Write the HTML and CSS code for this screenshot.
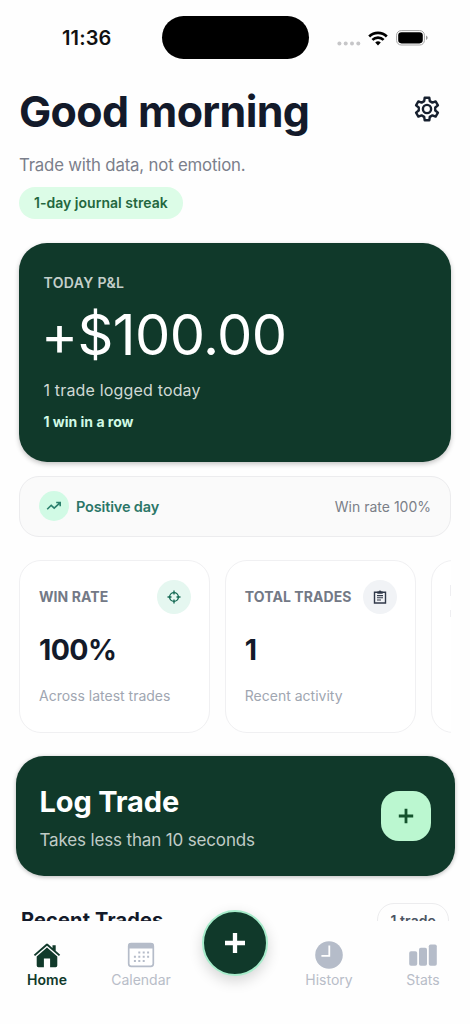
FILE: index.html
```html
<!DOCTYPE html>
<html lang="en">
<head>
<meta charset="utf-8">
<title>Trading Journal</title>
<link rel="stylesheet" href="styles.css">
</head>
<body>
<div class="phone">
  <div class="status">
    <span class="time">11:36</span>
    <span class="island"></span>
    <span class="signals">
      <svg class="dots" width="24" height="5" viewBox="0 0 24 5" fill="#c6c6c8"><circle cx="2.4" cy="2.5" r="2"/><circle cx="8.7" cy="2.5" r="2"/><circle cx="15" cy="2.5" r="2"/><circle cx="21.3" cy="2.5" r="2"/></svg>
      <svg class="wifi" width="20" height="15" viewBox="0 0 20 15" fill="none" stroke="#000" stroke-width="2.7"><path d="M1.2 5.5a12.6 12.6 0 0 1 17.6 0"/><path d="M4.4 8.9a8 8 0 0 1 11.2 0"/><path d="M10 14.5l-2.8-2.9a4 4 0 0 1 5.6 0z" fill="#000" stroke="none"/></svg>
      <svg class="battery" width="32" height="16" viewBox="0 0 32 16"><rect x=".6" y=".6" width="27.8" height="14.4" rx="4.6" fill="#fff" stroke="#a4a4a4" stroke-width="1"/><rect x="2.2" y="2.2" width="24.6" height="11.2" rx="3.3"/><path d="M30 5.6q1.7.7 1.7 2.2T30 10z" fill="#999"/></svg>
    </span>
  </div>

  <main class="screen">
    <header class="header">
      <h1 class="title">Good morning</h1>
      <svg class="gear" width="26" height="26" viewBox="-13 -13 26 26" fill="none" stroke="#17202f" stroke-width="2.400" stroke-linejoin="round"><path d="M-2.800-7.900L-2.300-11.300H2.300L2.800-7.900L5.440-6.370L8.640-7.640L10.940-3.660L8.240-1.530V1.530L10.940 3.660L8.640 7.640L5.440 6.370L2.800 7.900L2.300 11.300H-2.300L-2.800 7.900L-5.440 6.370L-8.640 7.640L-10.940 3.660L-8.240 1.530V-1.530L-10.940-3.660L-8.640-7.640L-5.440-6.370z"/><circle r="4.100"/></svg>
    </header>
    <p class="subtitle">Trade with data, not emotion.</p>
    <span class="streak">1-day journal streak</span>

    <section class="hero">
      <div class="hero-label">TODAY P&amp;L</div>
      <div class="hero-amount">+$100.00</div>
      <div class="hero-note">1 trade logged today</div>
      <div class="hero-run">1 win in a row</div>
    </section>

    <section class="mood">
      <span class="mood-icon"><svg width="16" height="10" viewBox="0 0 16 10" fill="none" stroke="#2b7f6c" stroke-width="1.6"><path d="M1.200 8.300l4-4 3 2.800 5.700-5.300M10.200 1.500h4v3.800"/></svg></span>
      <span class="mood-text">Positive day</span>
      <span class="mood-rate">Win rate 100%</span>
    </section>

    <section class="cards">
      <article class="card">
        <div class="card-top"><span class="card-label">WIN RATE</span><span class="card-icon mint"><svg width="14" height="14" viewBox="0 0 14 14" fill="none" stroke="#176b55" stroke-width="1.400"><circle cx="7" cy="7" r="4.400"/><path d="M7 .5v4M7 9.500v4M.5 7h4M9.500 7h4"/></svg></span></div>
        <div class="card-value">100%</div>
        <div class="card-note">Across latest trades</div>
      </article>
      <article class="card">
        <div class="card-top"><span class="card-label">TOTAL TRADES</span><span class="card-icon"><svg width="14" height="14" viewBox="0 0 14 14" fill="none" stroke="#303949" stroke-width="1.400"><path d="M1.500 2.300h11v10.700h-11z"/><path d="M4 5.600h6M4 7.800h6M4 10h4" stroke-width="1.100"/><path d="M4.300 1.500h1.300a1.450 1.450 0 0 1 2.800 0h1.300v2.300H4.300z" fill="#303949" stroke="none"/></svg></span></div>
        <div class="card-value">1</div>
        <div class="card-note">Recent activity</div>
      </article>
      <article class="card upcoming"><i class="edge"></i><i class="edge short"></i></article>
    </section>

    <section class="log">
      <div>
        <div class="log-title">Log Trade</div>
        <div class="log-sub">Takes less than 10 seconds</div>
      </div>
      <span class="log-add"><svg width="16" height="16" viewBox="0 0 16 16" stroke="#14532d" stroke-width="2.800"><path d="M8 .8v14.400M.8 8h14.400"/></svg></span>
    </section>

    <section class="recent">
      <h2 class="recent-title">Recent Trades</h2>
      <span class="recent-count">1 trade</span>
    </section>
  </main>

  <nav class="tabs">
    <a class="tab active">
      <svg width="28" height="26" viewBox="0 0 28 26" fill="#10392a"><path d="M.8 12.800L13 2q1-.8 2 0l4.500 4V3.200h3.200v5.600l4.500 4-1.300 1.300L14 3.700 2.100 14.100z"/><path d="M14 5.600l10.300 9v8.900q0 1.700-1.700 1.700h-5.500v-8.700h-6.200v8.700H5.400q-1.700 0-1.700-1.700v-8.900z"/></svg>
      <span>Home</span>
    </a>
    <a class="tab">
      <svg width="28" height="26" viewBox="0 0 28 26"><rect x="1.700" y="1.700" width="24.600" height="22.600" rx="2.500" fill="#fff" stroke="#b5bcc9" stroke-width="1.700"/><path d="M1.500 6.500V3q0-2 2-2h21q2 0 2 2v3.500z" fill="#b5bcc9"/><g stroke="#b5bcc9" stroke-width="2" stroke-dasharray="2 2.400"><path d="M11.300 10.400h11M6.900 14.700h15.400M6.900 19h11"/></g></svg>
      <span>Calendar</span>
    </a>
    <a class="fab"><svg width="22" height="22" viewBox="0 0 22 22" stroke="#fff" stroke-width="4.300"><path d="M11 1v20M1 11h20"/></svg></a>
    <a class="tab">
      <svg width="28" height="28" viewBox="0 0 28 28"><circle cx="14" cy="14" r="13.800" fill="#b5bcc9"/><path d="M14.300 4.600v10.200H6.400" fill="none" stroke="#fff" stroke-width="1.800"/></svg>
      <span>History</span>
    </a>
    <a class="tab">
      <svg width="28" height="24" viewBox="0 0 28 24" fill="#b5bcc9"><rect x=".2" y="8.200" width="8" height="14.500" rx="1.800"/><rect x="10" y="4.700" width="8" height="18" rx="1.800"/><rect x="19.800" y="1.400" width="8" height="21.300" rx="1.800"/></svg>
      <span>Stats</span>
    </a>
  </nav>
</div>
</body>
</html>
```
FILE: styles.css
```css
* { box-sizing: border-box; }
body { margin: 0; background: #fff; font-family: Inter, "Liberation Sans", sans-serif; color: #131a2a; }
.phone { width: 470px; height: 1024px; overflow: hidden; display: flex; flex-direction: column; background: #fefefe; }

.status { height: 76px; flex: none; padding-top: 16px; display: grid; grid-template-columns: 161.500px 147px 1fr; }
.time { padding-left: 62px; font-size: 20px; font-weight: 600; line-height: 45px; letter-spacing: .15px; color: #111; }
.island { height: 43px; border-radius: 22px; background: #000; }
.signals { display: flex; align-items: flex-start; padding-left: 28px; }
.dots { margin-top: 25px; }
.wifi { margin: 14.500px 0 0 7.500px; }
.battery { margin: 14px 0 0 8px; }

.screen { height: 845px; flex: none; overflow: hidden; padding: 9px 19px 0; display: flex; flex-direction: column; }
.header { height: 52px; flex: none; display: flex; justify-content: space-between; padding-right: 11px; }
.title { margin: 0; font-size: 43px; line-height: 52px; font-weight: 700; letter-spacing: -.65px; white-space: nowrap; }
.gear { margin-top: 11px; }
.subtitle { margin: 16px 0 0; font-size: 16.800px; line-height: 24px; letter-spacing: -.18px; color: #7b7f8b; }
.streak { align-self: flex-start; margin-top: 10px; height: 32px; border-radius: 16px; padding: 0 15px; background: #dcfce7; color: #23673e; font-size: 14px; line-height: 32px; letter-spacing: .02px; font-weight: 600; }

.hero { flex: none; height: 219px; margin-top: 23.500px; padding: 30px 24.500px 0; border-radius: 28px; background: #10392a; color: #fff; box-shadow: 0 2px 5px rgba(0,0,0,.24); }
.hero-label { font-size: 14px; line-height: 20px; font-weight: 600; letter-spacing: .38px; color: #c4cfca; }
.hero-amount { font-size: 56px; line-height: 66px; margin: 9.500px 0 0 -2.500px; font-weight: 400; letter-spacing: -.6px; }
.hero-note { font-size: 16px; line-height: 24px; margin-top: 10px; letter-spacing: .17px; color: #d0d9d5; }
.hero-run { font-size: 14px; line-height: 20px; margin-top: 9.500px; font-weight: 700; color: #d1fae5; }

.mood { flex: none; height: 61px; margin-top: 14px; border: 1px solid #ececee; border-radius: 20px; background: #fafafa; display: flex; align-items: center; padding: 0 19px; }
.mood-icon { width: 30px; height: 30px; border-radius: 50%; background: #d1fae5; display: grid; place-items: center; }
.mood-text { margin-left: 7px; font-size: 14.500px; letter-spacing: -.15px; font-weight: 600; color: #2b7668; }
.mood-rate { margin-left: auto; font-size: 14px; color: #7b7f88; }

.cards { flex: none; height: 173.500px; margin-top: 23px; display: flex; gap: 14.500px; overflow: hidden; }
.card { flex: none; width: 191.300px; border: 1px solid #f0f0f2; border-radius: 22px; background: #fff; padding: 19px 18.500px 19px 19px; }
.card-top { height: 34px; display: flex; align-items: center; justify-content: space-between; white-space: nowrap; }
.card-label { font-size: 14px; font-weight: 700; letter-spacing: .08px; color: #737986; }
.card-icon { width: 34px; height: 34px; border-radius: 50%; background: #f1f3f6; display: grid; place-items: center; }
.card-icon.mint { background: #e5f7f0; }
.card-value { font-size: 28.500px; line-height: 36px; margin-top: 18px; font-weight: 700; letter-spacing: -.6px; }
.card-note { font-size: 14px; line-height: 20px; margin-top: 18px; color: #a0a6b1; white-space: nowrap; }
.upcoming { padding: 24px 0 0 18.400px; }
.edge { display: block; width: 1px; height: 11px; background: #eeeef1; }
.edge.short { height: 7px; margin-top: 14px; }

.log { flex: none; height: 120px; margin: 22.500px -3.500px 0; border-radius: 28px; background: #10392a; padding: 0 24px; display: flex; align-items: center; justify-content: space-between; box-shadow: 0 1px 4px rgba(0,0,0,.28); }
.log-title { font-size: 29px; line-height: 38px; margin-top: 4px; font-weight: 700; letter-spacing: -.15px; color: #fff; }
.log-sub { font-size: 17px; line-height: 24px; margin-top: 7px; letter-spacing: -.15px; color: #c0ccc7; }
.log-add { width: 50px; height: 50px; border-radius: 18px; background: #bbf7d0; display: grid; place-items: center; }

.recent { flex: none; margin-top: 27px; display: flex; justify-content: space-between; padding: 0 2px; }
.recent-title { margin: 2px 0 0; font-size: 20px; line-height: 30px; font-weight: 700; letter-spacing: .15px; }
.recent-count { height: 34px; padding: 0 12px; border: 1px solid #ececee; border-radius: 17px; font-size: 14px; line-height: 34px; letter-spacing: .1px; font-weight: 600; color: #4b5563; }

.tabs { flex: none; height: 103px; display: grid; grid-template-columns: 94px 94px 94px 94px 94px; background: #fefefe; }
.tab { display: flex; flex-direction: column; align-items: center; font-size: 14px; line-height: 20px; color: #b8bdc8; }
.tab svg { height: 28px; margin: 20px 0 1px; }
.tab.active { color: #10392a; font-weight: 600; }
.fab { justify-self: center; margin-top: -11.500px; width: 66px; height: 66px; border: 2px solid #a7eccb; border-radius: 50%; background: #10392a; display: grid; place-items: center; box-shadow: 0 5px 14px rgba(0,0,0,.16); }
```
